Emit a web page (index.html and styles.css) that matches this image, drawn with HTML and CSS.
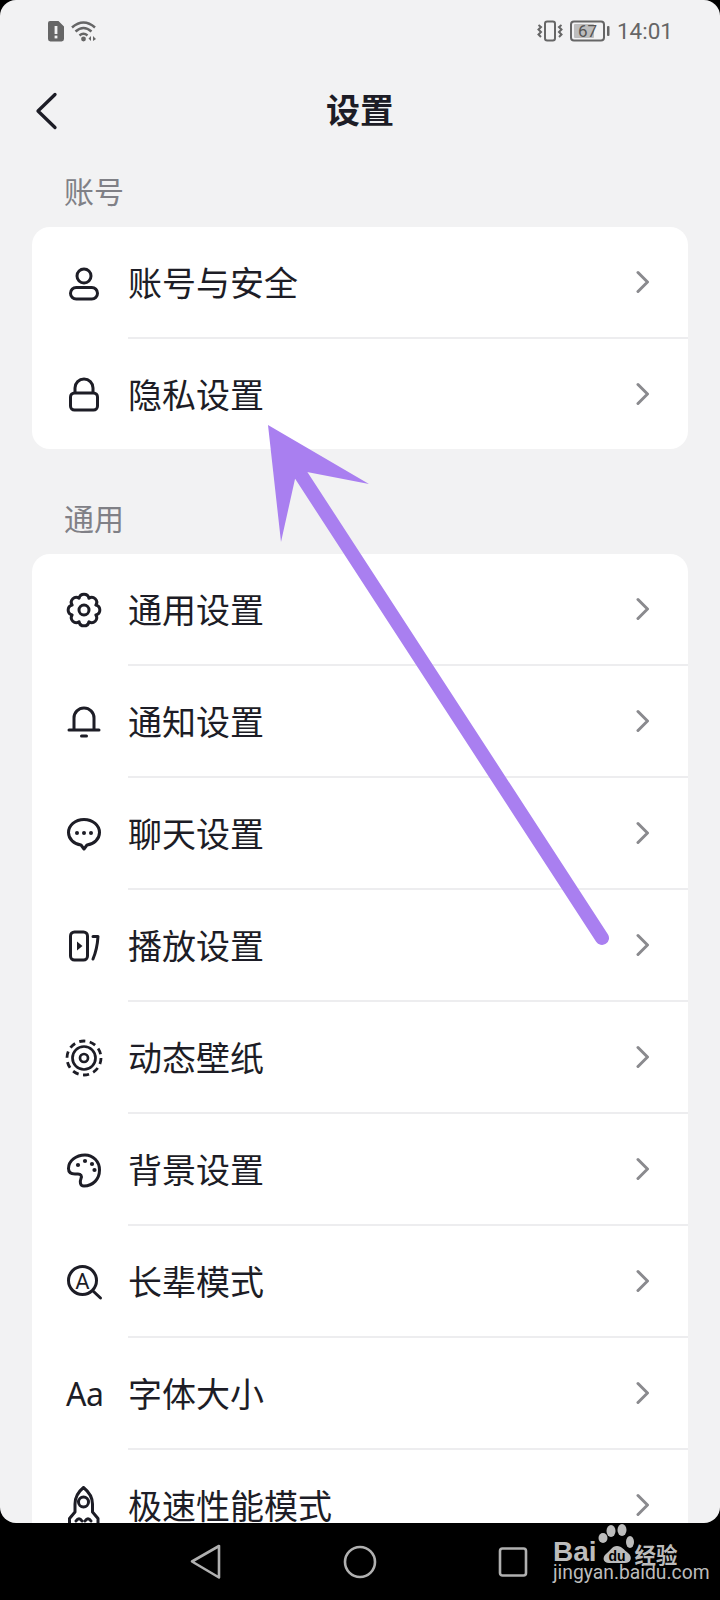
FILE: index.html
```html
<!DOCTYPE html>
<html lang="zh-CN">
<head>
<meta charset="utf-8">
<title>设置</title>
<link rel="stylesheet" href="styles.css">
</head>
<body>
<svg class="defs" width="0" height="0" aria-hidden="true">
  <symbol id="chev" viewBox="0 0 14 24"><path d="M2 2.5 L11.5 12 L2 21.5"/></symbol>
</svg>
<div class="screen">
  <div class="status">
    <div class="status-group">
      <svg class="st-sim" width="18" height="22" viewBox="0 0 18 22"><path class="st-fill" d="M3 1 H11.5 L17 6.5 V19 A2.4 2.4 0 0 1 14.6 21.4 H3.4 A2.4 2.4 0 0 1 1 19 V3 A2 2 0 0 1 3 1Z"/><rect class="st-cut" x="7.6" y="6" width="2.8" height="8"/><rect class="st-cut" x="7.6" y="15.6" width="2.8" height="2.8"/></svg>
      <svg class="st-wifi" width="26" height="22" viewBox="0 0 26 22"><path class="st-wave" d="M1 7.5 Q12.5 -2.5 24 7.5 M4.5 11.5 Q12.5 4.5 20.5 11.5 M8.5 15.5 Q12.5 12 16.5 15.5"/><circle class="st-fill" cx="12.5" cy="19" r="2.4"/><path class="st-fill" d="M20 16 V21 L17.5 18.5Z M22 16 V21 L25 19Z"/></svg>
    </div>
    <div class="status-group">
      <svg class="st-vib" width="27" height="22" viewBox="0 0 27 22"><rect class="st-line" x="8" y="1.500" width="10" height="19" rx="2.200"/><path class="st-thin" d="M1.500 5 L4 7 L1.500 9.500 L4 12 L1.500 14.500 L4 17 M24.500 5 L22 7 L24.500 9.500 L22 12 L24.500 14.500 L22 17"/></svg>
      <svg class="st-bat" width="41" height="22" viewBox="0 0 41 22"><rect class="st-bat-fill" x="4" y="4" width="20" height="14" rx="1"/><rect class="st-line" x="1" y="1.500" width="33" height="19" rx="3"/><rect class="st-fill" x="37" y="6" width="2.500" height="10" rx="1"/><text class="st-bat-num" x="17.500" y="17">67</text></svg>
      <span class="clock">14:01</span>
    </div>
  </div>

  <header class="topbar">
    <svg class="back" width="30" height="44" viewBox="0 0 30 44"><path d="M22 5.500 L5 22 L22 38.500"/></svg>
    <h1 class="title">设置</h1>
    <span class="topbar-spacer"></span>
  </header>

  <div class="section-label section-first">账号</div>
  <div class="card">
    <div class="row">
      <svg class="ico" viewBox="0 0 36 36"><circle cx="18" cy="11" r="7"/><rect x="4.500" y="22.500" width="27" height="11.500" rx="5.750"/></svg>
      <div class="row-body"><span class="row-text">账号与安全</span><svg class="chev"><use href="#chev"/></svg></div>
    </div>
    <div class="row row-end">
      <svg class="ico" viewBox="0 0 36 36"><rect x="4.500" y="17" width="27" height="17" rx="4"/><path d="M9 16.500 V12 A9 9 0 0 1 27 12 V16.500"/></svg>
      <div class="row-body"><span class="row-text">隐私设置</span><svg class="chev"><use href="#chev"/></svg></div>
    </div>
  </div>

  <div class="section-label">通用</div>
  <div class="card">
    <div class="row">
      <svg class="ico" viewBox="0 0 36 36"><path d="M29.830 22.900 A5 5 0 0 1 22.900 29.830 A5 5 0 0 1 13.100 29.830 A5 5 0 0 1 6.170 22.900 A5 5 0 0 1 6.170 13.100 A5 5 0 0 1 13.100 6.170 A5 5 0 0 1 22.900 6.170 A5 5 0 0 1 29.830 13.100 A5 5 0 0 1 29.830 22.900Z"/><circle cx="18" cy="18" r="5"/></svg>
      <div class="row-body"><span class="row-text">通用设置</span><svg class="chev"><use href="#chev"/></svg></div>
    </div>
    <div class="row">
      <svg class="ico" viewBox="0 0 36 36"><path d="M3 26 H33 M8 26 V14 A10 10 0 0 1 28 14 V26 M15.500 32 H20.500"/></svg>
      <div class="row-body"><span class="row-text">通知设置</span><svg class="chev"><use href="#chev"/></svg></div>
    </div>
    <div class="row">
      <svg class="ico" viewBox="0 0 36 36"><path d="M18 3.500 C9 3.500 2.500 9.500 2.500 16.500 C2.500 23 8 28 15 29 L18 33 L21 29 C28 28 33.500 23 33.500 16.500 C33.500 9.500 27 3.500 18 3.500Z"/><circle class="ico-dot" cx="11" cy="17" r="2"/><circle class="ico-dot" cx="18" cy="17" r="2"/><circle class="ico-dot" cx="25" cy="17" r="2"/></svg>
      <div class="row-body"><span class="row-text">聊天设置</span><svg class="chev"><use href="#chev"/></svg></div>
    </div>
    <div class="row">
      <svg class="ico" viewBox="0 0 36 36"><rect x="4.500" y="4" width="17" height="28" rx="4"/><path class="ico-dot" d="M11 13.500 L16.500 18 L11 22.500Z"/><path d="M27 8.500 H32 C31.500 16 30 24 27 31"/></svg>
      <div class="row-body"><span class="row-text">播放设置</span><svg class="chev"><use href="#chev"/></svg></div>
    </div>
    <div class="row">
      <svg class="ico" viewBox="0 0 36 36"><circle class="ico-dash" cx="18" cy="18" r="17"/><circle class="ico-ring" cx="18" cy="18" r="11.500"/><circle class="ico-ring" cx="18" cy="18" r="4"/></svg>
      <div class="row-body"><span class="row-text">动态壁纸</span><svg class="chev"><use href="#chev"/></svg></div>
    </div>
    <div class="row">
      <svg class="ico" viewBox="0 0 36 36"><path d="M19 3 C10 3 2.500 9 2.500 16.500 C2.500 20.500 5 22 9 22 H12 C15 22 16 24 15 26.500 C14 29 13.500 34 18 34 C27 34 33.500 27 33.500 18 C33.500 9.500 27 3 19 3Z"/><circle class="ico-dot" cx="12" cy="13" r="2.100"/><circle class="ico-dot" cx="19" cy="9" r="2.100"/><circle class="ico-dot" cx="26" cy="12" r="2.100"/><circle class="ico-dot" cx="28.500" cy="18" r="2.100"/></svg>
      <div class="row-body"><span class="row-text">背景设置</span><svg class="chev"><use href="#chev"/></svg></div>
    </div>
    <div class="row">
      <svg class="ico" viewBox="0 0 36 36"><circle cx="16.500" cy="16.500" r="14"/><path d="M27 27 L34.500 34"/><text class="ico-a" x="16.500" y="24.500">A</text></svg>
      <div class="row-body"><span class="row-text">长辈模式</span><svg class="chev"><use href="#chev"/></svg></div>
    </div>
    <div class="row">
      <span class="ico ico-aa">Aa</span>
      <div class="row-body"><span class="row-text">字体大小</span><svg class="chev"><use href="#chev"/></svg></div>
    </div>
    <div class="row">
      <svg class="ico" viewBox="0 0 36 36"><path d="M17.500 -0.500 C12 4 9 10 9 16 V24 L3.500 30.500 V36 M17.500 -0.500 C23 4 26.500 10 26.500 16 V24 L32 30.500 V36 M10 33 C12 30 14 30 16 33 M19 33 C21 30 23 30 25 33"/><circle cx="17.500" cy="14" r="5"/></svg>
      <div class="row-body"><span class="row-text">极速性能模式</span><svg class="chev"><use href="#chev"/></svg></div>
    </div>
  </div>

  <svg class="arrow" width="720" height="1523" viewBox="0 0 720 1523"><line class="arrow-shaft" x1="301" y1="475" x2="602" y2="938"/><polygon class="arrow-head" points="268,425 369,484 307,472 295,479 281,542"/></svg>
</div>

<nav class="navbar">
  <svg class="nav-ico" width="36" height="40" viewBox="0 0 36 40"><path d="M31 4 V35.500 L4 19.500Z"/></svg>
  <svg class="nav-ico" width="36" height="40" viewBox="0 0 36 40"><circle cx="18" cy="20" r="15"/></svg>
  <svg class="nav-ico" width="36" height="40" viewBox="0 0 36 40"><rect x="4" y="6.500" width="26" height="27" rx="2.500"/></svg>
</nav>

<div class="mark">
  <div class="mark-top">
    <span class="mark-bai">Bai</span>
    <svg class="mark-paw" width="38" height="41" viewBox="0 0 38 41">
      <ellipse cx="6" cy="15" rx="4.500" ry="5"/><ellipse cx="14" cy="8" rx="4.500" ry="6"/><ellipse cx="25" cy="7" rx="4.500" ry="6"/><ellipse cx="33" cy="19" rx="4" ry="6"/>
      <path d="M20 23 C15 23 13 28 9 31 C5 34 6 40 12 40 H28 C34 40 36 34 31 30 C27 27 25 23 20 23Z"/>
      <text class="mark-du" x="20" y="38">du</text>
    </svg>
    <span class="mark-cn">经验</span>
  </div>
  <div class="mark-url">jingyan.baidu.com</div>
</div>
</body>
</html>
```

FILE: styles.css
```css
* { box-sizing: border-box; }

html, body {
  margin: 0;
  padding: 0;
  width: 720px;
  height: 1600px;
  background: #000;
  overflow: hidden;
  font-family: "Noto Sans CJK SC", "Noto Sans", sans-serif;
}

.defs { position: absolute; }

.screen {
  position: relative;
  height: 1523px;
  overflow: hidden;
  background: #f2f2f3;
  border-radius: 16px;
}

/* status bar */
.status {
  height: 62px;
  padding: 0 47px 0 47px;
  display: flex;
  justify-content: space-between;
  align-items: center;
  color: #666;
}
.status-group { display: flex; align-items: center; gap: 6px; }
.st-fill { fill: #666; }
.st-cut { fill: #f2f2f3; }
.st-line { fill: none; stroke: #666; stroke-width: 2; }
.st-wave { fill: none; stroke: #666; stroke-width: 2.500; }
.st-thin { fill: none; stroke: #666; stroke-width: 2; }
.st-bat-fill { fill: #bdbdbd; }
.st-bat-num {
  font-family: Roboto, sans-serif;
  font-size: 17px;
  fill: #555;
  text-anchor: middle;
}
.clock {
  font-family: Roboto, sans-serif;
  font-size: 22.500px;
  color: #666;
}

/* top bar */
.topbar {
  height: 98px;
  padding: 0 0 0 33px;
  display: flex;
  align-items: center;
}
.back { flex: none; fill: none; stroke: #1d1d26; stroke-width: 3.300; stroke-linecap: round; stroke-linejoin: round; }
.topbar-spacer { width: 63px; flex: none; }
.title {
  flex: 1;
  margin: 0;
  padding-bottom: 4px;
  text-align: center;
  font-size: 34px;
  font-weight: 700;
  line-height: 48px;
  color: #1d1d26;
}

/* sections */
.section-label {
  padding: 48px 0 17px 64px;
  font-size: 30px;
  line-height: 40px;
  color: #808086;
}
.section-first { padding: 10px 0 17px 64px; }

.card {
  margin: 0 32px;
  background: #fff;
  border-radius: 18px;
}

.row {
  height: 112px;
  display: flex;
  align-items: center;
  padding-left: 34px;
}
.row-end { height: 110px; }
.row-end .row-body { border-bottom: 0; }

.row-body {
  flex: 1;
  align-self: stretch;
  margin-left: 26px;
  padding-right: 38px;
  display: flex;
  align-items: center;
  justify-content: space-between;
  border-bottom: 2px solid #ededef;
}

.row-text {
  font-size: 34px;
  line-height: 48px;
  color: #1d1d26;
}

.chev {
  width: 14px;
  height: 24px;
  fill: none;
  stroke: #8a8a8e;
  stroke-width: 3;
  stroke-linecap: round;
  stroke-linejoin: round;
}

/* list icons */
.ico {
  flex: none;
  width: 36px;
  height: 36px;
  overflow: visible;
  fill: none;
  stroke: #1d1d26;
  stroke-width: 3;
  stroke-linecap: round;
  stroke-linejoin: round;
}
.ico-dot { fill: #1d1d26; stroke: none; }
.ico-ring { stroke-width: 2.700; }
.ico-dash { stroke-width: 2.800; stroke-dasharray: 6.200 4.480; stroke-linecap: butt; }
.ico-a {
  font-family: Roboto, sans-serif;
  font-size: 22px;
  fill: #1d1d26;
  stroke: none;
  text-anchor: middle;
}
.ico-aa {
  font-family: "Noto Sans", sans-serif;
  font-size: 32px;
  line-height: 36px;
  color: #1d1d26;
  white-space: nowrap;
  letter-spacing: -0.500px;
}

/* annotation arrow */
.arrow { position: absolute; left: 0; top: 0; pointer-events: none; }
.arrow-shaft { stroke: #a97ff0; stroke-width: 14; stroke-linecap: round; }
.arrow-head { fill: #a97ff0; }

/* system nav */
.navbar {
  height: 77px;
  display: flex;
  align-items: center;
  gap: 118px;
  padding: 0 0 0 188px;
}
.nav-ico { fill: none; stroke: #b0b0b0; stroke-width: 2.600; stroke-linejoin: round; }

/* watermark */
.mark {
  position: absolute;
  left: 553px;
  top: 1523px;
  width: 130px;
  color: #bcbcbc;
}
.mark-top { display: flex; align-items: flex-end; height: 41px; }
.mark-bai {
  font-family: "Liberation Sans", sans-serif;
  font-weight: 700;
  font-size: 28px;
  line-height: 28px;
  margin-bottom: -2px;
}
.mark-paw { fill: #bcbcbc; flex: none; margin-left: 0; }
.mark-du {
  font-family: "Liberation Sans", sans-serif;
  font-weight: 700;
  font-size: 14px;
  fill: #000;
  text-anchor: middle;
}
.mark-cn { font-size: 21.500px; line-height: 24px; font-weight: 700; margin-bottom: -2px; }
.mark-url {
  font-family: Roboto, sans-serif;
  font-size: 19.300px;
  line-height: 22px;
  margin-top: -2px;
  white-space: nowrap;
}
```
